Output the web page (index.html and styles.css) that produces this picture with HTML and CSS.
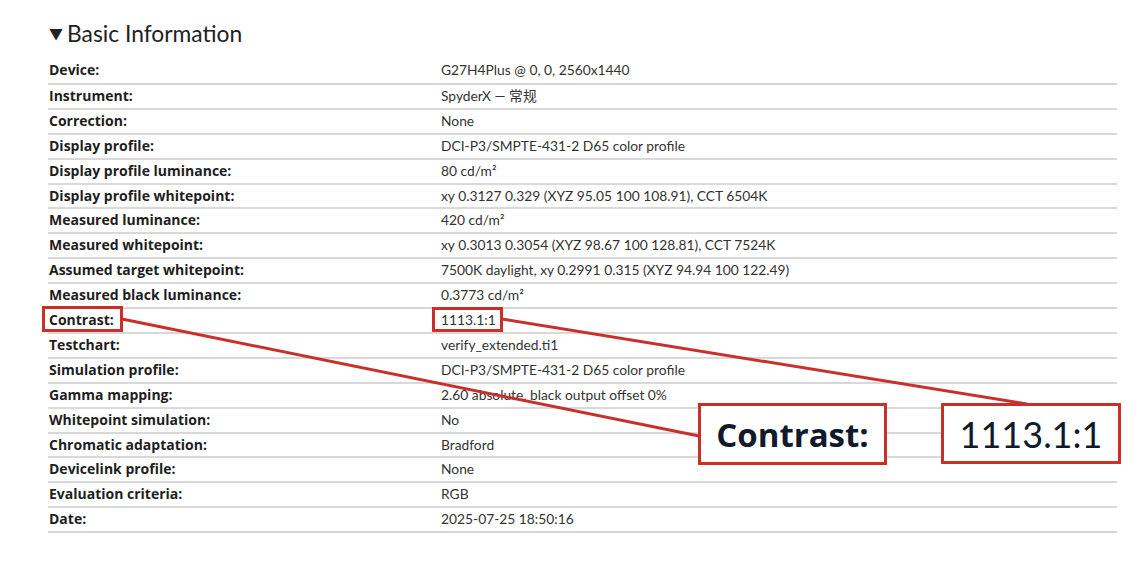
FILE: index.html
```html
<!DOCTYPE html>
<html lang="en">
<head>
    <meta charset="UTF-8">
    <title>Basic Information</title>
    <link rel="stylesheet" href="styles.css">
</head>
<body>

    <div class="page">
        <h2 class="section-title"><span class="caret">&#9660;</span>Basic Information</h2>

        <table class="info">
            <tr><th>Device:</th><td>G27H4Plus @ 0, 0, 2560x1440</td></tr>
            <tr><th>Instrument:</th><td>SpyderX &mdash; 常规</td></tr>
            <tr><th>Correction:</th><td>None</td></tr>
            <tr><th>Display profile:</th><td>DCI-P3/SMPTE-431-2 D65 color profile</td></tr>
            <tr><th>Display profile luminance:</th><td>80 cd/m²</td></tr>
            <tr><th>Display profile whitepoint:</th><td>xy 0.3127 0.329 (XYZ 95.05 100 108.91), CCT 6504K</td></tr>
            <tr><th>Measured luminance:</th><td>420 cd/m²</td></tr>
            <tr><th>Measured whitepoint:</th><td>xy 0.3013 0.3054 (XYZ 98.67 100 128.81), CCT 7524K</td></tr>
            <tr><th>Assumed target whitepoint:</th><td>7500K daylight, xy 0.2991 0.315 (XYZ 94.94 100 122.49)</td></tr>
            <tr><th>Measured black luminance:</th><td>0.3773 cd/m²</td></tr>
            <tr><th>Contrast:</th><td>1113.1:1</td></tr>
            <tr><th>Testchart:</th><td>verify_extended.ti1</td></tr>
            <tr><th>Simulation profile:</th><td>DCI-P3/SMPTE-431-2 D65 color profile</td></tr>
            <tr><th>Gamma mapping:</th><td>2.60 absolute, black output offset 0%</td></tr>
            <tr><th>Whitepoint simulation:</th><td>No</td></tr>
            <tr><th>Chromatic adaptation:</th><td>Bradford</td></tr>
            <tr><th>Devicelink profile:</th><td>None</td></tr>
            <tr><th>Evaluation criteria:</th><td>RGB</td></tr>
            <tr><th>Date:</th><td>2025-07-25 18:50:16</td></tr>
        </table>

        <!--  Annotation layer  -->

        <div class="annot">
            <svg class="annot-lines" width="1146" height="564" viewBox="0 0 1146 564">
                <line x1="122" y1="319" x2="699" y2="436" />
                <line x1="502" y1="319" x2="1027" y2="404" />
            </svg>
            <div class="mark mark-label"></div>
            <div class="mark mark-value"></div>
            <div class="callout callout-label">Contrast:</div>
            <div class="callout callout-value">1113.1:1</div>
        </div>
    </div>

</body>
</html>
```

FILE: styles.css
```css
* {
    margin: 0;
    padding: 0;
    box-sizing: border-box;
}

body {
    background-color: #fff;
    font-family: Lato, "Noto Sans CJK SC", sans-serif;
    font-size: 14px;
    color: #222;
}

.page {
    position: relative;
    width: 1146px;
    height: 564px;
    padding: 20px 0 0 48px;
}

.section-title {
    display: flex;
    align-items: center;
    height: 26px;
    font-weight: 400;
    font-size: 22.8px;
    color: #222;
}
.caret {
    font-size: 14px;
    margin: 0 4px 0 1px;
}

.info {
    margin-top: 13px;
    width: 1069px;
    border-collapse: collapse;
}
.info th,
.info td {
    height: 24.9px;
    line-height: 22.9px;
    border-bottom: 2px solid #d9d9d9;
    text-align: left;
    white-space: nowrap;
}
.info th {
    width: 393px;
    padding-left: 1px;
    font-family: "Open Sans", sans-serif;
    font-size: 14px;
    font-weight: 700;
    color: #1e1e1e;
}
.info td {
    font-size: 13.8px;
    color: #333;
}

/* annotations */

.annot {
    position: absolute;
    top: 0;
    left: 0;
    width: 1146px;
    height: 564px;
}
.annot-lines {
    position: absolute;
    top: 0;
    left: 0;
}
.annot-lines line {
    stroke: #c9302c;
    stroke-width: 3;
}

.mark {
    position: absolute;
    border: 3px solid #c9302c;
}
.mark-label {
    left: 42px;
    top: 306px;
    width: 81px;
    height: 26px;
}
.mark-value {
    left: 432px;
    top: 307px;
    width: 71px;
    height: 25px;
}

.callout {
    position: absolute;
    display: flex;
    align-items: center;
    justify-content: center;
    background-color: #fff;
    border: 3px solid #c9302c;
    font-size: 36px;
    color: #111a2b;
}
.callout-label {
    left: 698px;
    top: 403px;
    width: 189px;
    height: 62px;
    font-family: "Open Sans", sans-serif;
    font-size: 33px;
    font-weight: 700;
}
.callout-value {
    left: 941px;
    top: 403px;
    width: 180px;
    height: 61px;
}
```
